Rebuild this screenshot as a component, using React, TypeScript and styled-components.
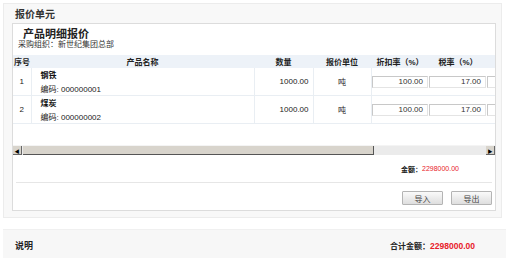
import styled, { createGlobalStyle } from 'styled-components';

const GlobalStyle = createGlobalStyle`
  html, body {
    margin: 0;
    padding: 0;
    background: #fff;
    font-family: "Liberation Sans", "Noto Sans CJK SC", sans-serif;
    color: #222;
  }
`;

const Page = styled.div`
  width: 510px;
  height: 258px;
  overflow: hidden;
  padding: 3px 0 0 3px;
  box-sizing: border-box;
`;

const Section = styled.div`
  width: 499px;
  box-sizing: border-box;
  background: #f8f8f8;
  border: 1px solid #ececec;
  padding: 0 6px 6px 8px;
`;

const SectionTitle = styled.div`
  height: 19px;
  line-height: 22px;
  padding-left: 3px;
  font-size: 10px;
  font-weight: bold;
  color: #333;
`;

const Panel = styled.div`
  background: #fff;
  border: 1px solid #dcdcdc;
  box-sizing: border-box;
  width: 484px;
`;

const PanelHead = styled.div`
  padding: 4px 0 0 5px;
  height: 31px;
  box-sizing: border-box;
`;

const PanelTitle = styled.div`
  font-size: 11px;
  font-weight: bold;
  line-height: 12px;
  padding-left: 5px;
  color: #222;
`;

const PanelSub = styled.div`
  font-size: 8px;
  line-height: 10px;
  color: #333;
`;

const Scroller = styled.div`
  width: 482px;
  height: 90px;
  overflow: hidden;
`;

const Table = styled.table`
  border-collapse: collapse;
  table-layout: fixed;
  width: 540px;
  font-size: 8px;
`;

const Th = styled.th<{ w: number }>`
  width: ${(p) => p.w}px;
  height: 13px;
  padding: 0;
  background: #edf2f8;
  font-weight: bold;
  font-size: 8px;
  text-align: center;
  color: #222;
  white-space: nowrap;
`;

const Td = styled.td<{ align?: string }>`
  height: 27px;
  padding: 0 4px;
  border-right: 1px solid #e9eef3;
  border-bottom: 1px solid #e9eef3;
  text-align: ${(p) => p.align || 'left'};
  color: #222;
  white-space: nowrap;
  font-size: 8px;
`;

const NameCell = styled.div`
  display: flex;
  flex-direction: column;
  gap: 3px;
  padding-left: 5px;
`;

const Name = styled.span`
  font-weight: bold;
  color: #111;
`;

const InputTd = styled.td`
  padding: 0;
  border-bottom: 1px solid #e9eef3;
`;

const NumBox = styled.div`
  height: 10px;
  margin: 0 1px 0 0;
  border: 1px solid #c8c8c8;
  border-right-color: #e4e4e4;
  border-bottom-color: #e4e4e4;
  text-align: right;
  line-height: 10px;
  padding-right: 4px;
  font-size: 8px;
  color: #333;
`;

const ScrollBar = styled.div`
  display: flex;
  width: 482px;
  height: 9px;
  background: #ebebeb;
  border-top: 1px solid #f4f4f4;
`;

const Arrow = styled.div`
  width: 8px;
  height: 8px;
  background: #d8d4cc;
  border-right: 1px solid #666;
  border-bottom: 1px solid #666;
  display: flex;
  align-items: center;
  justify-content: center;
  font-size: 5px;
  color: #000;
`;

const Thumb = styled.div`
  width: 350px;
  height: 8px;
  background: #d8d4cc;
  border-right: 1px solid #555;
  border-bottom: 1px solid #555;
  margin-left: 1px;
`;

const Track = styled.div`
  flex: 1;
`;

const AmountRow = styled.div`
  display: flex;
  justify-content: flex-end;
  padding: 0 33px 0 0;
  height: 27px;
  align-items: center;
  font-size: 7px;
  border-bottom: 1px solid #e6e6e6;
  margin: 0 3px;
`;

const Label = styled.span`
  font-weight: bold;
  color: #222;
`;

const Money = styled.span<{ big?: boolean }>`
  color: #e8202a;
  font-weight: ${(p) => (p.big ? 'bold' : 'normal')};
  font-size: ${(p) => (p.big ? 8.5 : 7)}px;
`;

const Actions = styled.div`
  display: flex;
  justify-content: flex-end;
  gap: 8px;
  padding: 8px 3px 5px 0;
`;

const Btn = styled.button`
  width: 41px;
  height: 14px;
  padding: 0;
  border: 1px solid #b4b4b4;
  border-radius: 1px;
  background: linear-gradient(#fafafa, #dedede);
  font-family: inherit;
  font-size: 8px;
  color: #444;
`;

const Footer = styled.div`
  margin-top: 11px;
  width: 503px;
  height: 30px;
  box-sizing: border-box;
  background: #f7f7f7;
  border-top: 1px solid #f0f0f0;
  border-bottom: 1px solid #e2e2e2;
  display: flex;
  align-items: center;
  justify-content: space-between;
  padding: 2px 31px 0 12px;
  font-size: 8px;
`;

const FooterTitle = styled.span`
  font-weight: bold;
  font-size: 9px;
  color: #222;
`;

const rows = [
  { no: 1, name: '钢铁', code: '000000001' },
  { no: 2, name: '煤炭', code: '000000002' },
];

export default function App() {
  return (
    <Page>
      <GlobalStyle />
      <Section>
        <SectionTitle>报价单元</SectionTitle>
        <Panel>
          <PanelHead>
            <PanelTitle>产品明细报价</PanelTitle>
            <PanelSub>采购组织：新世纪集团总部</PanelSub>
          </PanelHead>
          <Scroller>
            <Table>
              <thead>
                <tr>
                  <Th w={18}>序号</Th>
                  <Th w={223}>产品名称</Th>
                  <Th w={59}>数量</Th>
                  <Th w={58}>报价单位</Th>
                  <Th w={58}>折扣率（%）</Th>
                  <Th w={58}>税率（%）</Th>
                  <Th w={66} />
                </tr>
              </thead>
              <tbody>
                {rows.map((r) => (
                  <tr key={r.no}>
                    <Td align="center">{r.no}</Td>
                    <Td>
                      <NameCell>
                        <Name>{r.name}</Name>
                        <span>编码: {r.code}</span>
                      </NameCell>
                    </Td>
                    <Td align="right">1000.00</Td>
                    <Td align="center">吨</Td>
                    <InputTd>
                      <NumBox>100.00</NumBox>
                    </InputTd>
                    <InputTd>
                      <NumBox>17.00</NumBox>
                    </InputTd>
                    <InputTd>
                      <NumBox />
                    </InputTd>
                  </tr>
                ))}
              </tbody>
            </Table>
          </Scroller>
          <ScrollBar>
            <Arrow>◀</Arrow>
            <Thumb />
            <Track />
            <Arrow>▶</Arrow>
          </ScrollBar>
          <AmountRow>
            <Label>金额：</Label>
            <Money>2298000.00</Money>
          </AmountRow>
          <Actions>
            <Btn>导入</Btn>
            <Btn>导出</Btn>
          </Actions>
        </Panel>
      </Section>
      <Footer>
        <FooterTitle>说明</FooterTitle>
        <span>
          <Label>合计金额：</Label>
          <Money big>2298000.00</Money>
        </span>
      </Footer>
    </Page>
  );
}
